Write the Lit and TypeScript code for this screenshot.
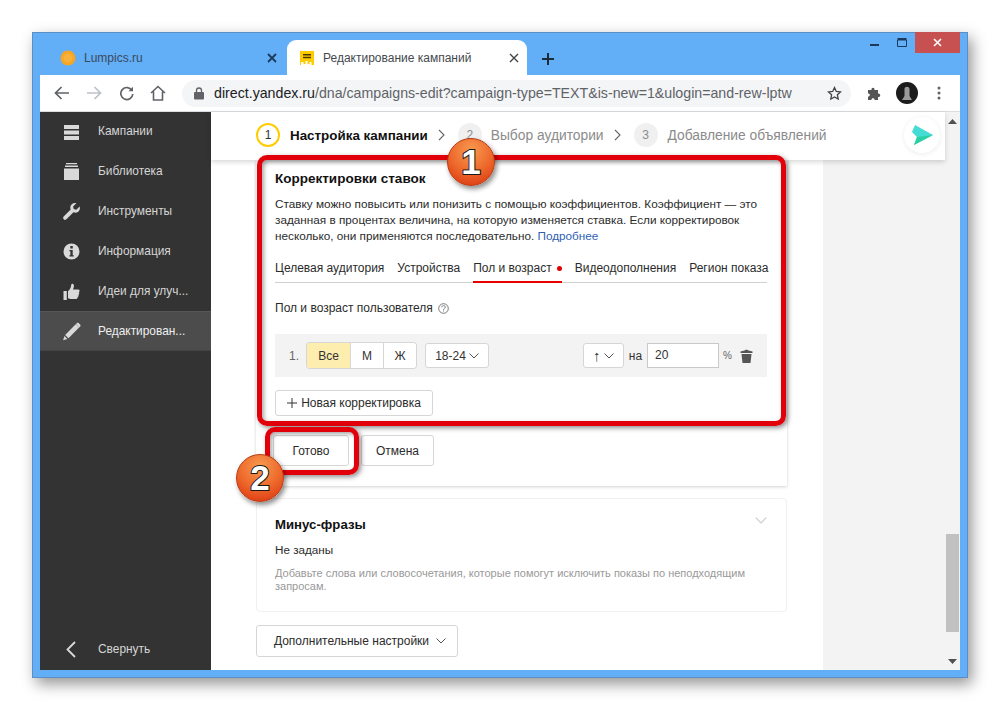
import { LitElement, html, css, svg } from 'lit';
import { customElement } from 'lit/decorators.js';

const sideIcons = {
  list: svg`<path d="M2 3h15v4H2zM2 8.500h15v4H2zM2 14h15v4H2z"/>`,
  lib: svg`<path d="M4 1h11v1.300H4zM3 3.600h13v1.400H3zM2 6.400h15V18H2z"/>`,
  tool: svg`<path d="M17.600 4.600l-3.300 3.100-2.600-.6-.6-2.500L14.300 1.300C11.600.5 8.400 2.300 8.300 5.400c0 .9.1 1.500.4 2.200L1.900 14.300c-1 1-1 2.200-.2 3s2 .8 3-.2l6.800-6.800c.7.300 1.300.4 2.200.4 3.200-.1 4.900-3.200 3.900-6.100z"/>`,
  info: svg`<path fill-rule="evenodd" d="M9.500 1.500a8 8 0 1 1 0 16 8 8 0 0 1 0-16zM8.300 4v2.400h2.500V4zM7.400 8v1.300h1v4H7.400v1.300h4.300v-1.300h-1V8z"/>`,
  like: svg`<path d="M1.500 9h3.300v9H1.500zM6 9.200c1.800-1.500 3-3.500 3.300-6.700.1-1 2.500-1 2.600 1.200.1 1.500-.5 2.900-.9 3.800h5.200c1.700 0 1.900 2.200.6 2.700.8 1 .5 2.200-.4 2.600.5 1 .1 2-.8 2.300.3 1.100-.3 1.900-1.500 1.900H9.500c-1.500 0-2.300-.7-3.500-.8z"/>`,
  pen: svg`<path d="M13.700 2.300l3.400 3.300L6.500 16.200l-3.400-3.300zM2.400 14l3 3-4.300 1.300zM14.800 1.200c.6-.6 1.300-.6 1.800-.1l1.700 1.700c.5.500.4 1.200-.2 1.800l-.9.900L13.900 2z"/>`,
};

@customElement('app-root')
export class AppRoot extends LitElement {
  static styles = css`
    :host {
      display: block;
      position: relative;
      width: 1000px;
      height: 710px;
      padding: 32px;
      box-sizing: border-box;
      background: #fff;
      overflow: hidden;
      font-family: "Liberation Sans", Arial, sans-serif;
      color: #1f1f1f;
    }
    .window {
      width: 936px;
      height: 646px;
      box-sizing: border-box;
      display: flex;
      flex-direction: column;
      background: #62aef7;
      padding: 0 8px 8px;
      outline: 1px solid #5b8fc4;
      outline-offset: -1px;
      box-shadow: 4px 6px 14px rgba(0, 0, 0, .42);
    }
    .titlebar {
      height: 43px;
      flex: none;
      display: flex;
      align-items: flex-end;
      position: relative;
    }
    .tab {
      box-sizing: border-box;
      height: 35px;
      display: flex;
      align-items: center;
      font-size: 12px;
      color: #45494e;
    }
    .tab.off { width: 246px; padding: 0 9px 0 20px; }
    .tab.on {
      width: 240px;
      margin-left: 1px;
      padding: 0 8px 0 12px;
      background: #fff;
      border-radius: 9px 9px 0 0;
    }
    .tab span { flex: 1; margin-left: 8px; }
    .tab.off span { color: #3a4a5c; }
    .plus { margin-left: 14px; margin-bottom: 9px; }
    .winctl {
      margin-left: auto;
      align-self: flex-start;
      display: flex;
      align-items: flex-start;
    }
    .winbtn { width: 27px; height: 21px; display: flex; align-items: center; justify-content: center; }
    .winclose { width: 45px; height: 21px; background: #c75050; display: flex; align-items: center; justify-content: center; }
    .toolbar {
      height: 37px;
      box-sizing: border-box;
      flex: none;
      background: #fff;
      border-bottom: 1px solid #dadce0;
      display: flex;
      align-items: center;
    }
    .navbtn { width: 32px; display: flex; justify-content: center; flex: none; }
    .navfirst { margin-left: 6px; }
    .omni {
      margin-left: 8px;
      width: 669px;
      height: 27px;
      box-sizing: border-box;
      border-radius: 14px;
      background: #f4f5f6;
      display: flex;
      align-items: center;
      padding: 0 9px 0 12px;
      font-size: 14.200px;
      color: #5f6368;
      flex: none;
    }
    .omni b { font-weight: 400; color: #202124; }
    .url { margin-left: 10px; flex: 1; white-space: nowrap; }
    .ext { margin-left: 16px; }
    .avatar { margin-left: 13px; }
    .dots { margin-left: 19px; }
    .content { flex: 1; display: flex; min-height: 0; }
    .side {
      width: 171px;
      flex: none;
      background: #333;
      display: flex;
      flex-direction: column;
      color: #d6d6d6;
      font-size: 11.900px;
    }
    .sitem {
      height: 40px;
      flex: none;
      display: flex;
      align-items: center;
      padding-left: 22px;
      box-sizing: border-box;
    }
    .sitem svg { fill: #d9d9d9; flex: none; }
    .sitem span { margin-left: 17px; white-space: nowrap; }
    .sitem.active {
      background: #4c4c4c;
      color: #eee;
      border-top: 1px solid #575757;
      border-bottom: 1px solid #444;
    }
    .sfirst { margin-top: -1px; }
    .collapse { margin-top: auto; height: 42px; }
    .collapse svg { fill: none; stroke: #d9d9d9; }
    .page {
      flex: 1;
      min-width: 0;
      display: flex;
      flex-direction: column;
      background: #f3f3f3;
      position: relative;
    }
    .stepper {
      height: 48px;
      box-sizing: border-box;
      flex: none;
      background: #fff;
      box-shadow: 0 2px 5px rgba(0, 0, 0, .16);
      display: flex;
      align-items: center;
      padding: 0 5px 2px 45px;
      font-size: 13.800px;
      color: #8b8b8b;
      position: relative;
      z-index: 1;
    }
    .num {
      width: 24px;
      height: 24px;
      box-sizing: border-box;
      border-radius: 50%;
      display: flex;
      align-items: center;
      justify-content: center;
      font-size: 12px;
      background: #f0f0f0;
      flex: none;
    }
    .num.cur { background: #fff; border: 2px solid #fc0; color: #333; }
    .stepname { margin-left: 10px; white-space: nowrap; }
    .stepname.cur { font-weight: 700; color: #111; font-size: 13.400px; }
    .stepname.next { margin-left: 9px; }
    .chev { margin: 0 13px 0 10px; flex: none; }
    .send {
      margin-left: auto;
      width: 36px;
      height: 36px;
      border-radius: 50%;
      background: #fff;
      box-shadow: 0 1px 5px rgba(0, 0, 0, .08);
      display: flex;
      align-items: center;
      justify-content: center;
    }
    .main {
      width: 612px;
      flex: 1;
      box-sizing: border-box;
      background: #fff;
      padding: 0 36px 0 45px;
      min-height: 0;
      overflow: hidden;
    }
    .card {
      background: #fff;
      box-shadow: 0 1px 3px rgba(0, 0, 0, .18);
      padding: 11px 20px 20px 19px;
      height: 326px;
      box-sizing: border-box;
    }
    h2 { margin: 0; font-size: 13.500px; line-height: 16px; font-weight: 700; color: #111; }
    .desc { margin: 9px 0 0; font-size: 11.750px; line-height: 16px; color: #2b2b2b; width: 500px; }
    .desc a { color: #2f5fb3; }
    .tabs {
      display: flex;
      gap: 13px;
      margin-top: 12px;
      height: 27px;
      box-sizing: border-box;
      border-bottom: 1px solid #d0d0d0;
      font-size: 12px;
      line-height: 24px;
      color: #2b2b2b;
      white-space: nowrap;
    }
    .tabs div { height: 27px; box-sizing: border-box; }
    .tabs .sel { border-bottom: 2px solid #e60000; display: flex; gap: 5px; }
    .tabs i { width: 5px; height: 5px; border-radius: 50%; background: #e00000; margin-top: 10px; }
    .label {
      margin-top: 17px;
      display: flex;
      align-items: center;
      gap: 5px;
      font-size: 12px;
      line-height: 16px;
      color: #2b2b2b;
    }
    .row {
      margin-top: 18px;
      height: 43px;
      width: 492px;
      box-sizing: border-box;
      background: #f3f3f3;
      display: flex;
      align-items: center;
      padding: 0 14px;
      font-size: 12px;
      color: #333;
    }
    .rownum { width: 18px; color: #666; flex: none; }
    .seg { display: flex; flex: none; height: 25px; border-radius: 3px; box-shadow: 0 0 0 1px #d6d6d6; }
    .seg div {
      display: flex;
      align-items: center;
      justify-content: center;
      background: #fff;
      border-left: 1px solid #d6d6d6;
    }
    .seg div:first-child { border-left: 0; border-radius: 3px 0 0 3px; background: #fdeeb0; width: 43px; }
    .seg div:last-child { border-radius: 0 3px 3px 0; }
    .seg .w { width: 32px; }
    .sel-box {
      height: 25px;
      box-sizing: border-box;
      border: 1px solid #d6d6d6;
      border-radius: 3px;
      background: #fff;
      display: flex;
      align-items: center;
      justify-content: center;
      gap: 3px;
      flex: none;
    }
    .age { width: 64px; margin-left: 9px; }
    .dir { width: 41px; margin-left: auto; font-size: 15px; }
    .na { margin-left: 5px; }
    .num-input {
      margin-left: 5px;
      width: 72px;
      height: 25px;
      box-sizing: border-box;
      border: 1px solid #c9c9c9;
      background: #fff;
      padding-left: 7px;
      line-height: 23px;
      flex: none;
    }
    .pct { margin-left: 4px; color: #666; font-size: 10px; }
    .trash { margin-left: 8px; flex: none; }
    .btn {
      box-sizing: border-box;
      border: 1px solid #d6d6d6;
      border-radius: 3px;
      background: #fff;
      font-size: 12px;
      display: flex;
      align-items: center;
      justify-content: center;
      color: #2b2b2b;
      white-space: nowrap;
    }
    .add { margin-top: 13px; width: 158px; height: 26px; gap: 4px; }
    .actions { display: flex; margin-top: 19px; margin-left: -2px; }
    .actions .btn { height: 31px; }
    .done { width: 76px; }
    .cancel { width: 73px; margin-left: 12px; }
    .card2 {
      margin-top: 12px;
      height: 114px;
      box-sizing: border-box;
      border: 1px solid #f0f0f0;
      border-radius: 4px;
      padding: 17px 18px 0 18px;
      position: relative;
    }
    .card2 h3 { margin: 0; font-size: 13.200px; line-height: 18px; font-weight: 700; color: #111; }
    .card2 p { margin: 8px 0 0; font-size: 11.700px; line-height: 16px; color: #2b2b2b; }
    .card2 small { display: block; margin-top: 9px; font-size: 11px; line-height: 13px; color: #999; width: 490px; }
    .card2 svg { position: absolute; right: 19px; top: 18px; }
    .more { margin-top: 13px; width: 202px; height: 32px; gap: 7px; padding-left: 6px; }
    .scroll {
      width: 15px;
      flex: none;
      background: #f3f3f3;
      display: flex;
      flex-direction: column;
      align-items: center;
    }
    .sc-up { margin-top: 7px; }
    .thumb { margin-top: auto; width: 13px; height: 98px; background: #c1c1c1; }
    .sc-down { margin-top: 27px; margin-bottom: 6px; }
    .mark {
      position: absolute;
      z-index: 2;
      box-sizing: border-box;
      border: 5px solid #e2000a;
      border-radius: 10px;
      box-shadow: 2px 2px 5px rgba(0, 0, 0, .45), inset 2px 2px 4px rgba(0, 0, 0, .35);
      pointer-events: none;
    }
    .mark-a { left: 257px; top: 155px; width: 529px; height: 271px; }
    .mark-b { left: 265px; top: 427px; width: 94px; height: 48px; }
    .badge {
      position: absolute;
      z-index: 3;
      width: 48px;
      height: 48px;
      box-sizing: border-box;
      border-radius: 50%;
      border: 1px solid #b93a10;
      background: radial-gradient(circle at 50% 25%, #f79a50 0%, #ee6a2c 50%, #d92f0d 100%);
      box-shadow: 2px 3px 5px rgba(0, 0, 0, .45);
      display: flex;
      align-items: center;
      justify-content: center;
      font-size: 35px;
      font-weight: 700;
      color: #fff;
      -webkit-text-stroke: 2px #1a1a1a;
      paint-order: stroke fill;
    }
    .badge-a { left: 447px; top: 138px; }
    .badge-b { left: 236px; top: 454px; }
  `;

  sideItem(icon: keyof typeof sideIcons, label: string, cls = '') {
    return html`<div class="sitem ${cls}">
      <svg width="19" height="19" viewBox="0 0 19 19">${sideIcons[icon]}</svg>
      <span>${label}</span>
    </div>`;
  }

  arrow(w = 10) {
    return html`<svg width=${w} height="6" viewBox="0 0 10 6" fill="none" stroke="#555"><path d="M.5.5l4.500 4.500L9.500.5"/></svg>`;
  }

  chevron() {
    return html`<svg class="chev" width="7" height="12" viewBox="0 0 7 12" fill="none" stroke="#666" stroke-width="1.100"><path d="M1 1l5 5-5 5"/></svg>`;
  }

  render() {
    return html`
      <div class="window">
        <div class="titlebar">
          <div class="tab off">
            <svg width="16" height="16" viewBox="0 0 16 16"><circle cx="8" cy="8" r="7.500" fill="#f6a623"/><circle cx="8" cy="8" r="4.500" fill="#f8b23c"/></svg>
            <span>Lumpics.ru</span>
            <svg width="10" height="10" viewBox="0 0 10 10" stroke="#1d3a5c" stroke-width="1.800"><path d="M1 1l8 8M9 1l-8 8"/></svg>
          </div>
          <div class="tab on">
            <svg width="16" height="16" viewBox="0 0 16 16"><path d="M1 1h14v14h-2.500v-3h-2v2h-2v-3h-2v3h-2v-2H2v3H1z" fill="#fc0"/><path d="M4 4h8v1.500H4zM4 6.800h8v1.500H4z" fill="#4a3a00"/></svg>
            <span>Редактирование кампаний</span>
            <svg width="10" height="10" viewBox="0 0 10 10" stroke="#444" stroke-width="1.400"><path d="M1 1l8 8M9 1l-8 8"/></svg>
          </div>
          <svg class="plus" width="14" height="14" viewBox="0 0 14 14" stroke="#1c2b3a" stroke-width="2"><path d="M7 1v12M1 7h12"/></svg>
          <div class="winctl">
            <div class="winbtn"><svg width="9" height="9" viewBox="0 0 9 9"><path d="M0 6h9v2H0z" fill="#1d3a5c"/></svg></div>
            <div class="winbtn"><svg width="10" height="9" viewBox="0 0 10 9" fill="none" stroke="#1d3a5c"><path d="M.5 2h9v6.500h-9z"/><path d="M.5 1h9" stroke-width="2"/></svg></div>
            <div class="winclose"><svg width="9" height="9" viewBox="0 0 9 9" stroke="#fff" stroke-width="1.600"><path d="M1 1l7 7M8 1l-7 7"/></svg></div>
          </div>
        </div>
        <div class="toolbar">
          <div class="navbtn navfirst"><svg width="16" height="14" viewBox="0 0 16 14" fill="none" stroke="#5f6368" stroke-width="1.700"><path d="M15 7H2M7.500 1L1.500 7l6 6"/></svg></div>
          <div class="navbtn"><svg width="16" height="14" viewBox="0 0 16 14" fill="none" stroke="#bdc1c6" stroke-width="1.700"><path d="M1 7h13M8.500 1l6 6-6 6"/></svg></div>
          <div class="navbtn"><svg width="15" height="15" viewBox="0 0 15 15" fill="none" stroke="#5f6368" stroke-width="1.700"><path d="M13 4.500a6 6 0 1 0 .8 3.500"/><path d="M14 .8v4.500H9.500" fill="#5f6368" stroke="none"/></svg></div>
          <div class="navbtn"><svg width="16" height="16" viewBox="0 0 16 16" fill="none" stroke="#5f6368" stroke-width="1.600"><path d="M1 8l7-6.500L15 8M3.500 6.500V15h9V6.500"/></svg></div>
          <div class="omni">
            <svg width="10" height="13" viewBox="0 0 10 13"><path d="M2.500 5V3.500a2.500 2.500 0 0 1 5 0V5" fill="none" stroke="#5f6368" stroke-width="1.300"/><rect y="5" width="10" height="7.500" rx="1" fill="#5f6368"/></svg>
            <div class="url"><b>direct.yandex.ru</b>/dna/campaigns-edit?campaign-type=TEXT&amp;is-new=1&amp;ulogin=and-rew-lptw</div>
            <svg width="15" height="15" viewBox="0 0 15 15" fill="none" stroke="#444" stroke-width="1.300"><path d="M7.500 1.500l1.800 3.900 4.200.5-3.100 2.900.8 4.200-3.700-2.100-3.700 2.100.8-4.200L1.500 5.900l4.200-.5z"/></svg>
          </div>
          <svg class="ext" width="16" height="16" viewBox="0 0 16 16"><path d="M1 5h3.500c-.5-3 3.500-3 3 0H11v3.500c3-.5 3 4 0 3.500V15H7.500c.5-2.500-3.500-2.500-3 0H1v-3.500c2.500.5 2.500-3.500 0-3z" fill="#555"/></svg>
          <svg class="avatar" width="22" height="22" viewBox="0 0 22 22"><circle cx="11" cy="11" r="11" fill="#1c1c1c"/><path d="M8.500 7c0-3 5-3 5 0v7l2.500 4H6l2.500-4z" fill="#9a9a9a"/></svg>
          <svg class="dots" width="4" height="14" viewBox="0 0 4 14" fill="#5f6368"><circle cx="2" cy="2" r="1.500"/><circle cx="2" cy="7" r="1.500"/><circle cx="2" cy="12" r="1.500"/></svg>
        </div>
        <div class="content">
          <div class="side">
            ${this.sideItem('list', 'Кампании', 'sfirst')}
            ${this.sideItem('lib', 'Библиотека')}
            ${this.sideItem('tool', 'Инструменты')}
            ${this.sideItem('info', 'Информация')}
            ${this.sideItem('like', 'Идеи для улуч...')}
            ${this.sideItem('pen', 'Редактирован...', 'active')}
            <div class="sitem collapse">
              <svg width="19" height="19" viewBox="0 0 19 19" stroke-width="1.800"><path d="M13 2L5.500 9.500 13 17"/></svg>
              <span>Свернуть</span>
            </div>
          </div>
          <div class="page">
            <div class="stepper">
              <div class="num cur">1</div>
              <div class="stepname cur">Настройка кампании</div>
              ${this.chevron()}
              <div class="num">2</div>
              <div class="stepname next">Выбор аудитории</div>
              ${this.chevron()}
              <div class="num">3</div>
              <div class="stepname">Добавление объявлений</div>
              <div class="send">
                <svg width="21" height="20" viewBox="0 0 21 20"><path d="M3 0l18 10L2 20l3-8-5-5z" fill="#44dcd4"/><path d="M5 12l16-2L2 20z" fill="#2bd0a4"/></svg>
              </div>
            </div>
            <div class="main">
              <div class="card">
                <h2>Корректировки ставок</h2>
                <p class="desc">Ставку можно повысить или понизить с помощью коэффициентов. Коэффициент — это заданная в процентах величина, на которую изменяется ставка. Если корректировок несколько, они применяются последовательно. <a>Подробнее</a></p>
                <div class="tabs">
                  <div>Целевая аудитория</div>
                  <div>Устройства</div>
                  <div class="sel">Пол и возраст<i></i></div>
                  <div>Видеодополнения</div>
                  <div>Регион показа</div>
                </div>
                <div class="label">Пол и возраст пользователя
                  <svg width="11" height="11" viewBox="0 0 11 11" fill="none" stroke="#777"><circle cx="5.500" cy="5.500" r="4.800"/><path d="M3.800 4.300c0-2.200 3.500-2.200 3.500-.1 0 1.300-1.800 1.300-1.800 2.600M5.500 7.500v1"/></svg>
                </div>
                <div class="row">
                  <div class="rownum">1.</div>
                  <div class="seg"><div>Все</div><div class="w">М</div><div class="w">Ж</div></div>
                  <div class="sel-box age">18-24 ${this.arrow()}</div>
                  <div class="sel-box dir">↑ ${this.arrow()}</div>
                  <div class="na">на</div>
                  <div class="num-input">20</div>
                  <div class="pct">%</div>
                  <svg class="trash" width="13" height="14" viewBox="0 0 13 14" fill="#555"><path d="M4.500 1.500C5 .5 8 .5 8.500 1.500L12.500 2.500V4H.5V2.500zM1.500 5h10l-1 9h-8z"/></svg>
                </div>
                <div class="btn add">
                  <svg width="10" height="10" viewBox="0 0 10 10" stroke="#333"><path d="M5 0v10M0 5h10"/></svg>
                  Новая корректировка
                </div>
                <div class="actions">
                  <div class="btn done">Готово</div>
                  <div class="btn cancel">Отмена</div>
                </div>
              </div>
              <div class="card2">
                <h3>Минус-фразы</h3>
                <p>Не заданы</p>
                <small>Добавьте слова или словосочетания, которые помогут исключить показы по неподходящим запросам.</small>
                <svg width="12" height="7" viewBox="0 0 10 6" fill="none" stroke="#ccc"><path d="M.5.5l4.500 4.500L9.500.5"/></svg>
              </div>
              <div class="btn more">Дополнительные настройки ${this.arrow()}</div>
            </div>
          </div>
          <div class="scroll">
            <svg class="sc-up" width="9" height="5" viewBox="0 0 9 5"><path d="M4.500 0L9 5H0z" fill="#505050"/></svg>
            <div class="thumb"></div>
            <svg class="sc-down" width="9" height="5" viewBox="0 0 9 5"><path d="M0 0h9L4.500 5z" fill="#505050"/></svg>
          </div>
        </div>
      </div>
      <div class="mark mark-a"></div>
      <div class="mark mark-b"></div>
      <div class="badge badge-a">1</div>
      <div class="badge badge-b">2</div>
    `;
  }
}
